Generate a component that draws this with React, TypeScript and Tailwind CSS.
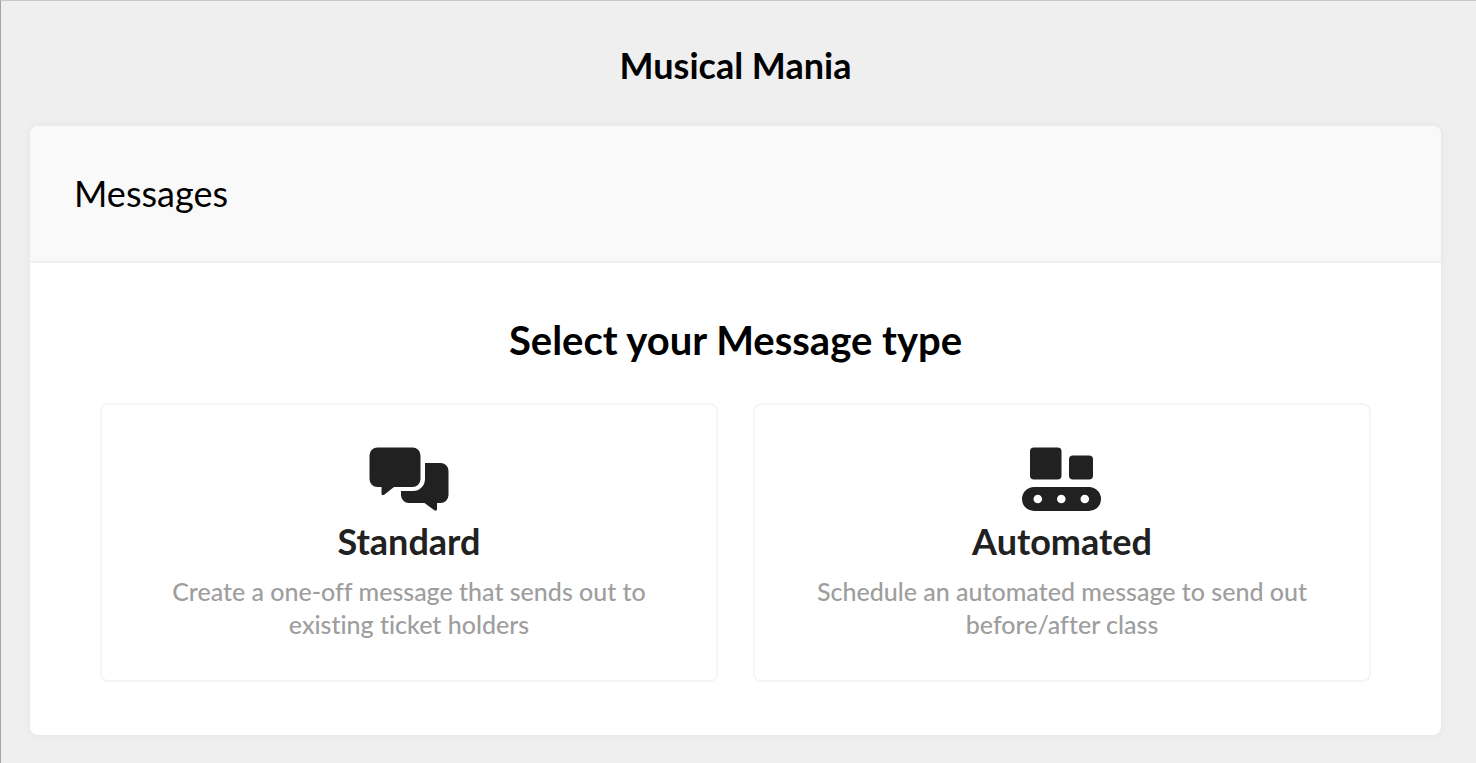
import type { ReactNode } from "react";

interface MessageType {
  id: string;
  title: string;
  description: string;
  icon: ReactNode;
}

function ChatIcon() {
  return (
    <svg
      className="h-16 w-20"
      viewBox="0 0 80 64"
      fill="currentColor"
      aria-hidden="true"
    >
      <path d="M8.500 .5h35a8 8 0 0 1 8 8v23.500a8 8 0 0 1-8 8H25L15.500 47.500Q12.500 49.500 12.500 46.500V40H8.500a8 8 0 0 1-8-8V8.500a8 8 0 0 1 8-8Z" />
      <path d="M56 16h15.500a8 8 0 0 1 8 8v24a8 8 0 0 1-8 8H68v6q0 3-3 1L55.500 56H40a8 8 0 0 1-8-8v-4h12a12 12 0 0 0 12-12Z" />
    </svg>
  );
}

function ConveyorIcon() {
  return (
    <svg
      className="h-16 w-20"
      viewBox="0 0 80 64"
      fill="currentColor"
      aria-hidden="true"
    >
      <rect x="8" y="0.5" width="31.500" height="32" rx="4" />
      <rect x="47" y="8.500" width="24" height="24" rx="4" />
      <path
        fillRule="evenodd"
        d="M12 40h55a12 12 0 0 1 0 24h-55a12 12 0 0 1 0-24ZM11.500 52a4.300 4.300 0 1 0 8.600 0a4.300 4.300 0 1 0-8.600 0ZM35 52a4.300 4.300 0 1 0 8.600 0a4.300 4.300 0 1 0-8.600 0ZM58.500 52a4.300 4.300 0 1 0 8.600 0a4.300 4.300 0 1 0-8.600 0Z"
      />
    </svg>
  );
}

const messageTypes: MessageType[] = [
  {
    id: "standard",
    title: "Standard",
    description:
      "Create a one-off message that sends out to existing ticket holders",
    icon: <ChatIcon />,
  },
  {
    id: "automated",
    title: "Automated",
    description: "Schedule an automated message to send out before/after class",
    icon: <ConveyorIcon />,
  },
];

function MessageTypeCard({ type }: { type: MessageType }) {
  return (
    <button
      type="button"
      className="flex flex-col items-center rounded-lg border-2 border-[#f5f5f5] bg-white px-14 pt-[42px] pb-[39px] text-[#212121]"
    >
      {type.icon}
      <span className="mt-[6px] text-[36px] leading-12 font-bold">
        {type.title}
      </span>
      <span className="mt-[10px] text-[25px] leading-[33px] font-medium text-[#9e9e9e]">
        {type.description}
      </span>
    </button>
  );
}

function App() {
  return (
    <div className="min-h-screen border-t border-l border-t-[#c8c8cc] border-l-[#a3a3a3] bg-[#efefef] pr-[35px] pb-7 pl-[29px] font-['Lato','Open_Sans',sans-serif] text-black [font-variant-ligatures:none]">
      <h1 className="pt-10 pb-[37px] text-center text-[36px] leading-12 font-bold">
        Musical Mania
      </h1>
      <main className="rounded-lg bg-white shadow-[0_0_6px_#dfe2e6]">
        <header className="rounded-t-lg border-b-2 border-[#eeeff0] bg-[#f9f9fa] px-11 pt-[43px] pb-11">
          <h2 className="text-[36px] leading-12">Messages</h2>
        </header>
        <section className="px-[70px] py-[53px]">
          <h3 className="text-center text-[40px] leading-12 font-bold">
            Select your Message type
          </h3>
          <div className="mt-[39px] grid grid-cols-2 gap-[35px]">
            {messageTypes.map((type) => (
              <MessageTypeCard key={type.id} type={type} />
            ))}
          </div>
        </section>
      </main>
    </div>
  );
}

export default App;
